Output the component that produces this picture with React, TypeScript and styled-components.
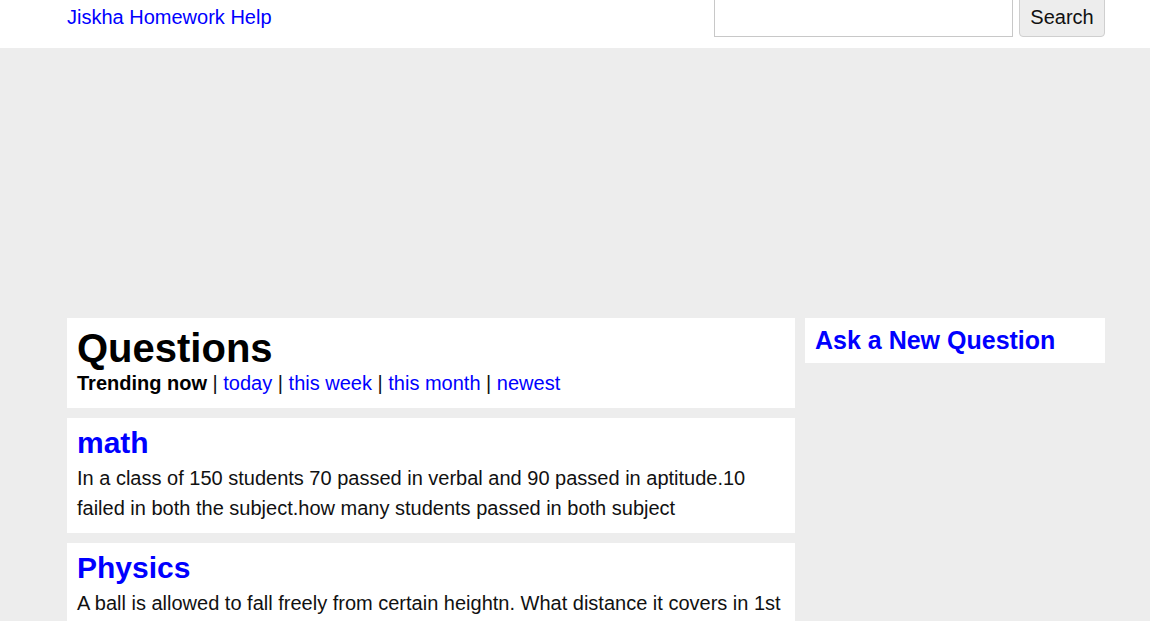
import React from "react";
import styled, { createGlobalStyle } from "styled-components";

const Global = createGlobalStyle`
  html, body {
    margin: 0;
    padding: 0;
    background: #ededed;
    font-family: "Liberation Sans", Arial, sans-serif;
    font-size: 20px;
    color: #111;
  }
  a { color: #0000ff; text-decoration: none; }
`;

const Header = styled.header`
  background: #fff;
  height: 48px;
  overflow: hidden;
`;

const HeaderInner = styled.div`
  width: 1038px;
  margin-left: 67px;
  display: flex;
  justify-content: space-between;
  align-items: flex-start;
`;

const Logo = styled.a`
  font-size: 20px;
  line-height: 34px;
`;

const SearchForm = styled.form`
  display: flex;
  gap: 6px;
  margin-top: -7px;
  height: 44px;
`;

const SearchInput = styled.input`
  box-sizing: border-box;
  width: 299px;
  height: 44px;
  border: 1px solid #c8c8c8;
  background: #fff;
  font-family: inherit;
  font-size: 20px;
  padding: 0 8px;
`;

const SearchButton = styled.button`
  box-sizing: border-box;
  width: 86px;
  height: 44px;
  padding: 5px 0 0;
  border: 1px solid #cfcfcf;
  border-radius: 4px;
  background: #ededed;
  font-family: inherit;
  font-size: 20px;
  color: #111;
`;

const AdSlot = styled.div`
  height: 270px;
`;

const Layout = styled.div`
  width: 1038px;
  margin-left: 67px;
  display: grid;
  grid-template-columns: 728px 300px;
  gap: 10px;
  align-items: start;
`;

const Column = styled.main`
  display: flex;
  flex-direction: column;
  gap: 10px;
`;

const Card = styled.section`
  background: #fff;
  padding: 10px;
`;

const PageTitle = styled.h1`
  margin: 0;
  font-size: 40px;
  line-height: 40px;
  font-weight: bold;
  color: #000;
`;

const Filters = styled.div`
  line-height: 30px;
  color: #111;
`;

const Strong = styled.strong`
  color: #000;
`;

const Subject = styled.h2`
  margin: 0 0 5px;
  font-size: 30px;
  line-height: 30px;
  font-weight: bold;
`;

const Body = styled.p`
  margin: 0;
  line-height: 30px;
`;

const AskTitle = styled.h2`
  margin: 0;
  font-size: 25px;
  line-height: 25px;
  font-weight: bold;
`;

const questions = [
  {
    subject: "math",
    text: "In a class of 150 students 70 passed in verbal and 90 passed in aptitude.10 failed in both the subject.how many students passed in both subject",
  },
  {
    subject: "Physics",
    text: "A ball is allowed to fall freely from certain heightn. What distance it covers in 1st second and in 2nd second?",
  },
];

export default function App() {
  return (
    <>
      <Global />
      <Header>
        <HeaderInner>
          <Logo href="#">Jiskha Homework Help</Logo>
          <SearchForm onSubmit={(e) => e.preventDefault()}>
            <SearchInput type="text" aria-label="Search" />
            <SearchButton type="submit">Search</SearchButton>
          </SearchForm>
        </HeaderInner>
      </Header>
      <AdSlot />
      <Layout>
        <Column>
          <Card>
            <PageTitle>Questions</PageTitle>
            <Filters>
              <Strong>Trending now</Strong> | <a href="#">today</a> |{" "}
              <a href="#">this week</a> | <a href="#">this month</a> |{" "}
              <a href="#">newest</a>
            </Filters>
          </Card>
          {questions.map((q) => (
            <Card key={q.subject}>
              <Subject>
                <a href="#">{q.subject}</a>
              </Subject>
              <Body>{q.text}</Body>
            </Card>
          ))}
        </Column>
        <aside>
          <Card>
            <AskTitle>
              <a href="#">Ask a New Question</a>
            </AskTitle>
          </Card>
        </aside>
      </Layout>
    </>
  );
}
